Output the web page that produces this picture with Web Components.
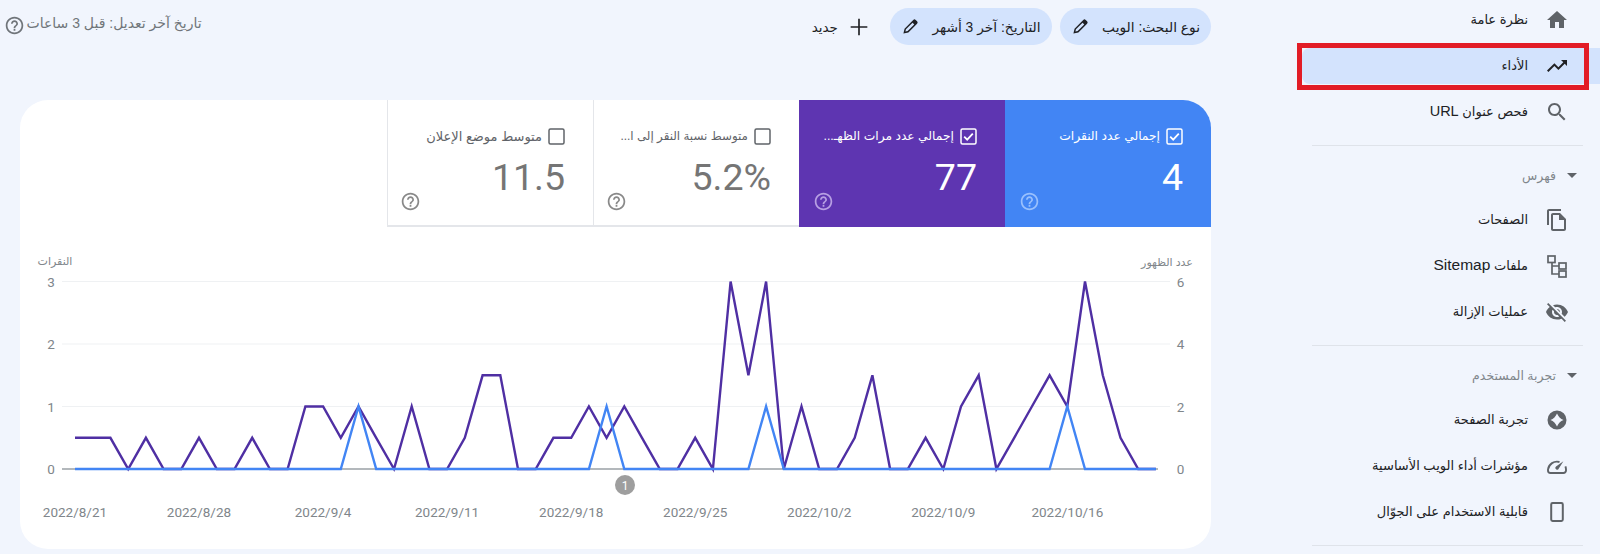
<!DOCTYPE html>
<html lang="ar" dir="rtl">
<head>
<meta charset="utf-8">
<title>Performance</title>
<style>
html,body{margin:0;padding:0;background:#f1f5fd;height:554px;overflow:hidden;font-family:"Liberation Sans","DejaVu Sans",sans-serif}
</style>
</head>
<body>
<sc-app></sc-app>
<template id="app-tpl">
<style>
:host{display:flex;width:1600px;height:554px;overflow:hidden;color:#202124}
.main{width:1205px;padding-left:6px;padding-right:1px;display:flex;flex-direction:column;flex:none;order:2}
sc-sidebar{order:1}
.top{display:flex;align-items:center;height:37px;margin-top:8px;margin-bottom:55px;gap:8px}
sc-updated{margin-inline-start:auto}
.card{margin-left:14px;width:1191px;height:449px;background:#fff;border-radius:28px;overflow:hidden;display:flex;flex-direction:column}
.tiles{display:flex;height:127px;flex:none}
</style>
<sc-sidebar></sc-sidebar>
<div class="main">
  <div class="top">
    <sc-chip>نوع البحث: الويب</sc-chip>
    <sc-chip>التاريخ: آخر 3 أشهر</sc-chip>
    <sc-new>جديد</sc-new>
    <sc-updated>تاريخ آخر تعديل: قبل 3 ساعات</sc-updated>
  </div>
  <div class="card">
    <div class="tiles">
      <sc-tile variant="blue" checked value="4" style="font-size:12.3px">إجمالي عدد النقرات</sc-tile>
      <sc-tile variant="purple" checked value="77" style="font-size:12.3px">إجمالي عدد مرات الظهـ...</sc-tile>
      <sc-tile value="5.2%" style="font-size:11.9px">متوسط نسبة النقر إلى ا...</sc-tile>
      <sc-tile value="11.5">متوسط موضع الإعلان</sc-tile>
    </div>
    <sc-chart></sc-chart>
  </div>
</div>
</template>
<script>
const P={
 home:'<path d="M10 20v-6h4v6h5v-8h3L12 3 2 12h3v8z"/>',
 trend:'<path d="M16 6l2.29 2.29-4.88 4.88-4-4L2 16.59 3.41 18l6-6 4 4 6.3-6.29L22 12V6z"/>',
 search:'<path d="M15.5 14h-.79l-.28-.27C15.41 12.59 16 11.11 16 9.5 16 5.91 13.09 3 9.5 3S3 5.91 3 9.5 5.91 16 9.5 16c1.61 0 3.09-.59 4.23-1.57l.27.28v.79l5 4.99L20.49 19l-4.99-5zm-6 0C7.01 14 5 11.99 5 9.5S7.01 5 9.5 5 14 7.01 14 9.5 11.99 14 9.5 14z"/>',
 pages:'<path d="M16 1H4c-1.1 0-2 .9-2 2v14h2V3h12V1zm-1 4H8c-1.1 0-1.99.9-1.99 2L6 21c0 1.1.89 2 1.99 2H19c1.1 0 2-.9 2-2V11l-6-6zM8 21V7h6v5h5v9H8z"/>',
 sitemap:'<g fill="none" stroke="currentColor" stroke-width="1.7"><rect x="3" y="2" width="7" height="6.5"/><rect x="14" y="9" width="7" height="6"/><rect x="14" y="17" width="7" height="6"/><path d="M7 8.5V20h7M7 12h7"/></g>',
 off:'<path d="M12 7c2.76 0 5 2.24 5 5 0 .65-.13 1.26-.36 1.83l2.92 2.92c1.51-1.26 2.7-2.89 3.43-4.75-1.73-4.39-6-7.5-11-7.5-1.4 0-2.74.25-3.98.7l2.16 2.16C10.74 7.13 11.35 7 12 7zM2 4.27l2.28 2.28.46.46C3.08 8.3 1.78 10.02 1 12c1.73 4.39 6 7.5 11 7.5 1.55 0 3.03-.3 4.38-.84l.42.42L19.73 22 21 20.73 3.27 3 2 4.27zM7.53 9.8l1.55 1.55c-.05.21-.08.43-.08.65 0 1.66 1.34 3 3 3 .22 0 .44-.03.65-.08l1.55 1.55c-.67.33-1.41.53-2.2.53-2.76 0-5-2.24-5-5 0-.79.2-1.53.53-2.2zm4.31-.78l3.15 3.15.02-.16c0-1.66-1.34-3-3-3l-.17.01z"/>',
 exp:'<path fill-rule="evenodd" d="M12 2.5a9.5 9.5 0 1 0 0 19 9.5 9.5 0 0 0 0-19zm0 3c1.2 3 3.5 5.3 6.5 6.5-3 1.2-5.3 3.5-6.5 6.5-1.2-3-3.5-5.3-6.5-6.5 3-1.2 5.3-3.5 6.5-6.5z"/>',
 gauge:'<g fill="none" stroke="currentColor" stroke-width="1.9" stroke-linejoin="round"><path d="M14.5 8A9 9 0 0 0 3 15.5v1A2.5 2.5 0 0 0 5.5 19h13a2.5 2.5 0 0 0 2.5-2.5v-1a9 9 0 0 0-.6-3.2"/></g><path d="M18.4 7.2l-4.6 7.3a1.8 1.8 0 1 1-2.8-2.1z"/>',
 mobile:'<rect x="6.2" y="3" width="11.6" height="18" rx="1.4" fill="none" stroke="currentColor" stroke-width="2"/>',
 help:'<path d="M11 18h2v-2h-2v2zm1-16C6.48 2 2 6.48 2 12s4.48 10 10 10 10-4.48 10-10S17.52 2 12 2zm0 18c-4.41 0-8-3.59-8-8s3.59-8 8-8 8 3.59 8 8-3.59 8-8 8zm0-14c-2.21 0-4 1.79-4 4h2c0-1.1.9-2 2-2s2 .9 2 2c0 2-3 1.75-3 5h2c0-2.25 3-2.5 3-5 0-2.21-1.79-4-4-4z"/>',
 edit:'<path d="M19.3 2.7a2.4 2.4 0 0 0-3.4 0L3.6 15 2 22l7-1.6L21.3 8.1a2.4 2.4 0 0 0 0-3.4zM8 18.4l-3.2.8.8-3.2L14.9 6.7l2.4 2.4z"/>',
 plus:'<path d="M22 13H13v9h-2v-9H2v-2h9V2h2v9h9z"/>'
};
const svg=(n,s)=>`<svg width="${s}" height="${s}" viewBox="0 0 24 24" fill="currentColor" aria-hidden="true">${P[n]}</svg>`;

class Base extends HTMLElement{
  render(html){this.attachShadow({mode:'open'}).innerHTML=html}
}
class ScApp extends Base{
  connectedCallback(){if(this.shadowRoot)return;
    this.attachShadow({mode:'open'}).appendChild(document.getElementById('app-tpl').content.cloneNode(true));}
}
class ScChip extends Base{
  connectedCallback(){if(this.shadowRoot)return;this.render(`<style>
  :host{display:flex;align-items:center;height:37px;box-sizing:border-box;padding:0 11px 0 12.5px;background:#d3e3fd;border-radius:19px;gap:13px;font-size:13.8px;color:#202124;flex:none;white-space:nowrap}
  svg{flex:none;color:#202124}</style><slot></slot>${svg('edit',17)}`)}
}
class ScNew extends Base{
  connectedCallback(){if(this.shadowRoot)return;this.render(`<style>
  :host{display:flex;align-items:center;gap:11px;font-size:13.5px;color:#202124;flex-direction:row-reverse;margin-inline-start:13px;white-space:nowrap;flex:none}
  svg{flex:none;color:#202124}</style><slot></slot>${svg('plus',20)}`)}
}
class ScUpdated extends Base{
  connectedCallback(){if(this.shadowRoot)return;this.render(`<style>
  :host{display:flex;align-items:center;gap:2px;font-size:14px;color:#70757a;white-space:nowrap;margin-top:-8px;margin-left:-2.5px}
  svg{flex:none;color:#70757a;transform:translateY(3px)}</style><slot></slot>${svg('help',21)}`)}
}
class ScTile extends Base{
  connectedCallback(){if(this.shadowRoot)return;
    const c=this.hasAttribute('checked');
    const box=`<svg width="17" height="17" viewBox="0 0 17 17" fill="none" stroke="currentColor"><rect x="1" y="1" width="15" height="15" rx="1.5" stroke-width="1.5"/>${c?'<path d="M4.2 8.6l3 3 5.6-6" stroke-width="1.8"/>':''}</svg>`;
    this.render(`<style>
    :host{display:flex;flex-direction:column;box-sizing:border-box;width:206px;height:127px;flex:none;padding:26px 28px 0 12px;font-size:13px;white-space:nowrap;
      background:#fff;color:#5f6368;border-left:1px solid #e4e6ea;border-bottom:2px solid #e4e6ea}
    :host([variant=blue]){background:#4285f4;color:#fff;border:0;padding-left:14px}
    :host([variant=purple]){background:#5e35b1;color:#fff;border:0;padding-left:14px}
    .h{display:flex;align-items:center;gap:6px;height:20px}
    .h svg{flex:none}
    .v{font:400 37.5px/40px Roboto,sans-serif;text-align:start;margin-top:11px;color:#757575}
    :host([variant]) .v{color:#fff}
    .q{align-self:flex-end;margin-top:-6px;height:21px;opacity:.85;color:#757575}
    :host([variant=blue]) .q{color:#a9cbff}
    :host([variant=purple]) .q{color:#c7b2ec}
    </style><div class="h">${box}<span><slot></slot></span></div><div class="v"><bdi>${this.getAttribute('value')}</bdi></div><div class="q">${svg('help',21)}</div>`)}
}
class ScNavItem extends Base{
  connectedCallback(){if(this.shadowRoot)return;
    this.render(`<style>
    :host{display:flex;align-items:center;height:46px;box-sizing:border-box;padding-right:31px;gap:17px;font-size:13px;color:#202124;white-space:nowrap;position:relative}
    svg{flex:none;color:#5f6368}
    .l{padding-bottom:2px}
    :host([active]) svg{color:#202124}
    .bg,.mark{display:none;position:absolute}
    :host([active]) .bg{display:block;left:90px;right:0;top:5px;bottom:5px;background:#d3e3fd;border-radius:8px 0 0 8px;z-index:-1}
    :host([active]) .mark{display:block;left:85px;right:11px;top:0;bottom:-1px;border:5px solid #e21c26;box-sizing:border-box}
    </style><span class="bg"></span><span class="mark"></span>${svg(this.getAttribute('icon'),24)}<span class="l"><slot></slot></span>`)}
}
class ScNavHead extends Base{
  connectedCallback(){if(this.shadowRoot)return;
    this.render(`<style>
    :host{display:flex;align-items:center;height:51px;box-sizing:border-box;padding:8px 23px 0 0;gap:11px;font-size:12.5px;color:#80868b;white-space:nowrap}
    i{width:0;height:0;border:5px solid transparent;border-top:5px solid #5f6368;border-bottom:0;flex:none}
    </style><i></i><span><slot></slot></span>`)}
}
class ScSidebar extends Base{
  connectedCallback(){if(this.shadowRoot)return;
    this.render(`<style>
    :host{display:flex;flex-direction:column;width:388px;flex:none;margin-top:-3px;isolation:isolate}
    hr{border:0;height:1px;background:#dfe3ea;margin:10px 17px 0 0;width:271px;flex:none;align-self:flex-start}
    b{font-weight:400}
    </style>
    <sc-nav-item icon="home">نظرة عامة</sc-nav-item>
    <sc-nav-item icon="trend" active>الأداء</sc-nav-item>
    <sc-nav-item icon="search">فحص عنوان <b style="font-size:14.5px">URL</b></sc-nav-item>
    <hr>
    <sc-nav-head>فهرس</sc-nav-head>
    <sc-nav-item icon="pages">الصفحات</sc-nav-item>
    <sc-nav-item icon="sitemap">ملفات <b style="font-size:15.5px">Sitemap</b></sc-nav-item>
    <sc-nav-item icon="off">عمليات الإزالة</sc-nav-item>
    <hr>
    <sc-nav-head>تجربة المستخدم</sc-nav-head>
    <sc-nav-item icon="exp">تجربة الصفحة</sc-nav-item>
    <sc-nav-item icon="gauge">مؤشرات أداء الويب الأساسية</sc-nav-item>
    <sc-nav-item icon="mobile">قابلية الاستخدام على الجوّال</sc-nav-item>
    <hr>`)}
}
class ScChart extends Base{
  connectedCallback(){if(this.shadowRoot)return;
    const Y0=469,U=31.25,X0=75,DX=17.72;
    const pur=[1,1,1,0,1,0,0,1,0,0,1,0,0,2,2,1,2,1,0,2,0,0,1,3,3,0,0,1,1,2,1,2,1,0,0,1,0,6,3,6,0,2,0,0,1,3,0,0,1,0,2,3,0,1,2,3,2,6,3,1,0,0];
    const blue=pur.map((_,i)=>[16,30,39,56].includes(i)?2:0);
    const pts=a=>a.map((v,i)=>(X0+i*DX).toFixed(1)+','+(Y0-v*U).toFixed(1)).join(' ');
    const grid=[1,2,3].map(k=>`<line x1="62" x2="1170" y1="${Y0-k*2*U}" y2="${Y0-k*2*U}" stroke="#eff1f3"/>`).join('');
    const tick=[0,1,2,3].map(k=>`<text x="51" y="${Y0-k*2*U+5}" text-anchor="middle">${k}</text><text x="1180.5" y="${Y0-k*2*U+5}" text-anchor="middle">${k*2}</text>`).join('');
    const dates=['2022/8/21','2022/8/28','2022/9/4','2022/9/11','2022/9/18','2022/9/25','2022/10/2','2022/10/9','2022/10/16'];
    const dt=dates.map((d,i)=>`<text x="${(X0+i*7*DX).toFixed(1)}" y="517" text-anchor="middle">${d}</text>`).join('');
    this.render(`<style>
    :host{display:block;flex:1}
    svg{display:block}
    .t text{font:13.5px Roboto,sans-serif;fill:#80868b;direction:ltr}
    .a{font:11px "Liberation Sans","DejaVu Sans",sans-serif;fill:#80868b}
    </style>
    <svg width="1191" height="322" viewBox="20 227 1191 322" direction="ltr">
      ${grid}
      <line x1="62" x2="1158" y1="${Y0}" y2="${Y0}" stroke="#9aa0a6" stroke-width="1.5"/>
      <g class="t">${tick}${dt}</g>
      <text class="a" x="55" y="265" text-anchor="middle">النقرات</text>
      <text class="a" x="1167" y="266" text-anchor="middle">عدد الظهور</text>
      <polyline points="${pts(pur)}" fill="none" stroke="#4f2fa3" stroke-width="2.4" stroke-linejoin="miter"/>
      <polyline points="${pts(blue)}" fill="none" stroke="#4285f4" stroke-width="2.4"/>
      <circle cx="625" cy="485" r="10" fill="#9e9e9e"/>
      <text x="625" y="489.5" text-anchor="middle" style="font:12px Roboto,sans-serif;fill:#fff">1</text>
    </svg>`)}
}
customElements.define('sc-chip',ScChip);
customElements.define('sc-new',ScNew);
customElements.define('sc-updated',ScUpdated);
customElements.define('sc-tile',ScTile);
customElements.define('sc-nav-item',ScNavItem);
customElements.define('sc-nav-head',ScNavHead);
customElements.define('sc-sidebar',ScSidebar);
customElements.define('sc-chart',ScChart);
customElements.define('sc-app',ScApp);
</script>
</body>
</html>
